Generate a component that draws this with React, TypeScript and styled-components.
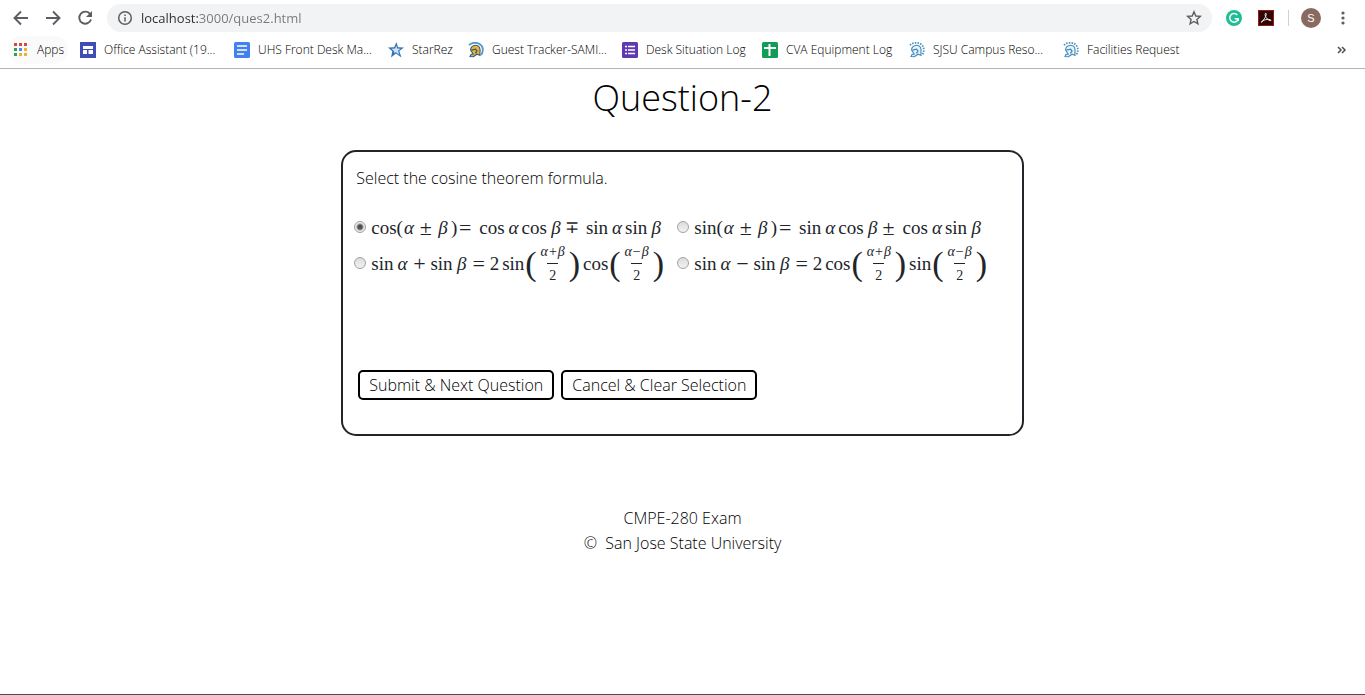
import React, { useState } from "react";
import styled, { createGlobalStyle } from "styled-components";

const GlobalStyle = createGlobalStyle`
  *, *::before, *::after { box-sizing: border-box; }
  body {
    margin: 0;
    background: #fff;
    color: #000;
    font-family: "Open Sans", "Noto Sans", sans-serif;
    font-size: 16px;
    font-weight: 300;
    line-height: 24px;
  }
`;

const Page = styled.div`
  min-height: 100vh;
  display: flex;
  flex-direction: column;
  border-bottom: 1px solid #4f4a54;
`;

const BrowserChrome = styled.header`
  border-bottom: 1px solid #b4b4b4;
`;

const Toolbar = styled.div`
  display: flex;
  align-items: center;
  height: 36px;
  padding: 0 12px 0 11px;
`;

const IconButton = styled.button`
  display: grid;
  place-items: center;
  width: 20px;
  height: 20px;
  padding: 0;
  border: 0;
  background: none;
  color: #5a5d61;
`;

const NavButtons = styled.div`
  display: flex;
  gap: 12px;
  margin-right: 12px;
`;

const AddressBar = styled.div`
  flex: 1;
  display: flex;
  align-items: center;
  gap: 6px;
  height: 28px;
  padding: 0 8px;
  border-radius: 14px;
  background: #f1f3f4;
`;

const AddressInput = styled.input`
  flex: 1;
  min-width: 0;
  height: 20px;
  padding: 0;
  border: 0;
  outline: 0;
  color: transparent;
  caret-color: #333;
  background: linear-gradient(90deg, #2b2e31 57px, #75797d 57px);
  background-clip: text;
  -webkit-background-clip: text;
  font: 13px/20px "Open Sans", sans-serif;
`;

const Extensions = styled.div`
  display: flex;
  align-items: center;
  gap: 12px;
  margin-left: 12px;
`;

const Divider = styled.span`
  width: 1px;
  height: 16px;
  background: #cfd1d3;
`;

const Avatar = styled(IconButton)`
  border-radius: 50%;
  background: #8a6a5f;
  color: #fff;
  font: 11px "Liberation Sans", sans-serif;
`;

const Bookmarks = styled.nav`
  display: flex;
  align-items: center;
  height: 32px;
  padding: 0 15px 4px 8px;
`;

const Bookmark = styled.a<{ $width: number }>`
  display: flex;
  align-items: center;
  gap: 8px;
  flex: 0 0 ${(p) => p.$width}px;
  height: 28px;
  padding-left: 4px;
  border-radius: 14px;
  color: #000;
  font-size: 12px;
  line-height: 16px;
  white-space: nowrap;
  text-decoration: none;
  svg { flex: none; }
`;

const AppsBookmark = styled(Bookmark)`
  flex-basis: 60px;
  margin-right: 8px;
  background: #fafafa;
`;

const MoreBookmarks = styled(IconButton)`
  margin-left: auto;
  width: 16px;
`;

const Main = styled.main`
  display: flex;
  flex-direction: column;
  align-items: center;
`;

const Title = styled.h1`
  margin: 5px 0 28px;
  font-size: 36px;
  line-height: 48px;
  font-weight: 300;
`;

const Card = styled.form`
  width: 50%;
  min-width: 680px;
  padding: 14px 12px 34px 11px;
  border: 2px solid #212529;
  border-radius: 15px;
`;

const Choices = styled.fieldset`
  display: grid;
  grid-template-columns: 323px 1fr;
  grid-template-rows: 36px 36px;
  align-items: center;
  min-width: 0;
  margin: 0;
  padding: 0;
  border: 0;
`;

const Prompt = styled.legend`
  margin-bottom: 20px;
  padding: 0 2px;
`;

const Choice = styled.label`
  display: flex;
  align-items: center;
  gap: 5px;
  white-space: nowrap;
`;

const Radio = styled.input`
  appearance: none;
  width: 12px;
  height: 12px;
  margin: 0 0 3px;
  border: 1px solid #a2a2a2;
  border-radius: 50%;
  background: linear-gradient(#dcdcdc, #f2f2f2);
  &:checked {
    background: radial-gradient(circle, #505050 0 2px, #e8e8e8 4px);
  }
`;

const Formula = styled.span`
  display: flex;
  align-items: center;
  color: #212529;
  font: 19px/24px "Liberation Serif", serif;
`;

const Fn = styled.span`
  margin-right: 3px;
`;

const Var = styled.span`
  width: 12px;
  margin-right: 2px;
  font-style: italic;
  text-align: center;
`;

const SignBox = styled.span<{ $wide?: boolean; $small?: boolean }>`
  width: 14px;
  margin: 0 ${(p) => (p.$wide ? 7 : 4)}px 0 ${(p) => (p.$wide ? 1 : 2)}px;
  display: flex;
  justify-content: center;
  font-size: ${(p) => (p.$small ? 17 : 22)}px;
`;

const TallParen = styled.span`
  font-size: 34px;
`;

const Half = styled.span`
  display: flex;
  align-items: center;
  margin: 0 3px 0 1px;
`;

const Fraction = styled.span`
  display: flex;
  flex-direction: column;
  align-items: center;
  width: 32px;
  font-size: 14px;
  line-height: 12px;
`;

const Numerator = styled.span`
  display: flex;
  gap: 1px;
`;

const Bar = styled.span`
  width: 11px;
  height: 1px;
  margin: 5px 0 6px;
  background: #212529;
`;

const Actions = styled.div`
  display: flex;
  gap: 7px;
  margin: 88px 0 0 4px;
`;

const ActionButton = styled.button`
  height: 30px;
  padding: 0 9px;
  border: 2px solid #000;
  border-radius: 5px;
  background: #fff;
  color: #000;
  font: 300 16px/24px "Open Sans", sans-serif;
`;

const Footer = styled.footer`
  margin-top: 70px;
  text-align: center;
  line-height: 25px;
`;

const BackIcon = ({ flip = false }: { flip?: boolean }) => (
  <svg width="16" height="16" viewBox="0 0 16 16" fill="none" stroke="currentColor" strokeWidth="1.9">
    <path d={flip ? "M1 8H14M8 1.5 14.5 8 8 14.5" : "M15 8H2M8 1.5 1.5 8 8 14.5"} />
  </svg>
);

const ReloadIcon = () => (
  <svg width="16" height="16" viewBox="0 0 16 16" fill="none" stroke="currentColor" strokeWidth="1.9">
    <path d="M13.2 4.2A6 6 0 1 0 14 9.5" />
    <path d="M15 1V7H9Z" fill="currentColor" stroke="none" />
  </svg>
);

const InfoIcon = () => (
  <svg width="20" height="16" viewBox="0 0 20 16" fill="none" stroke="#5a5d61" strokeWidth="1.5">
    <circle cx="10" cy="8" r="6.3" />
    <path d="M10 7.2V11.5M10 4.4V5.9" />
  </svg>
);

const StarIcon = () => (
  <svg width="16" height="16" viewBox="0 0 16 16" fill="none" stroke="currentColor" strokeWidth="1.4">
    <path d="M8 1.8 9.8 6 14.3 6.4 10.9 9.4 11.9 13.9 8 11.5 4.1 13.9 5.1 9.4 1.7 6.4 6.2 6Z" />
  </svg>
);

const GrammarlyIcon = () => (
  <svg width="16" height="16" viewBox="0 0 16 16" fill="none">
    <circle cx="8" cy="8" r="8" fill="#1dbf93" />
    <path d="M11.3 5A4.3 4.3 0 1 0 12.2 9M8.7 8.7H12.2V11" stroke="#fff" strokeWidth="1.5" />
  </svg>
);

const AcrobatIcon = () => (
  <svg width="16" height="16" viewBox="0 0 16 16" fill="none">
    <rect x=".5" y=".5" width="15" height="15" fill="#2b0708" stroke="#a01418" />
    <path d="M7.6 3.2C9 3 8.2 7 3.8 12.2 2.6 13 3 11 6.5 10 10 9 13 9.3 13 10.5 12 11.6 7 8 7.1 4.2Z" stroke="#f1e7e7" strokeWidth="1" />
  </svg>
);

const MenuIcon = () => (
  <svg width="16" height="16" fill="currentColor">
    <circle cx="8" cy="3" r="1.6" />
    <circle cx="8" cy="8" r="1.6" />
    <circle cx="8" cy="13" r="1.6" />
  </svg>
);

const MoreIcon = () => (
  <svg width="10" height="8" fill="none" stroke="#4c4f53" strokeWidth="1.5">
    <path d="M1 1 4 4 1 7M5 1 8 4 5 7" />
  </svg>
);

const appColors = ["#d9443f", "#d9443f", "#d9443f", "#2e9e5b", "#4a8af4", "#e9b233", "#2e9e5b", "#e9b233", "#e9b233"];

const AppsIcon = () => (
  <svg width="17" height="16">
    {appColors.map((fill, i) => (
      <rect key={i} x={2 + (i % 3) * 5} y={1 + Math.floor(i / 3) * 5} width="3" height="3" fill={fill} />
    ))}
  </svg>
);

const SitesIcon = () => (
  <svg width="16" height="16">
    <rect width="16" height="16" fill="#3f4db5" />
    <path d="M3 4H13V7H3ZM3 8H7V12H3ZM8.5 8H13V12H8.5Z" fill="#fff" />
  </svg>
);

const DocsIcon = () => (
  <svg width="16" height="16">
    <rect width="16" height="16" rx="1.5" fill="#4380f0" />
    <path d="M3 4H13M3 8H13M3 12H10" stroke="#fff" strokeWidth="1.7" />
  </svg>
);

const FormsIcon = () => (
  <svg width="16" height="16">
    <rect width="16" height="16" rx="1.5" fill="#6038b0" />
    <path d="M3 4.5H5M3 8H5M3 11.5H5M6 4.5H13M6 8H13M6 11.5H13" stroke="#fff" strokeWidth="1.7" />
  </svg>
);

const SheetsIcon = () => (
  <svg width="16" height="16">
    <rect width="16" height="16" rx="1.5" fill="#109d58" />
    <path d="M2 6H14M7.5 2V14" stroke="#fff" strokeWidth="2" />
  </svg>
);

const StarRezIcon = () => (
  <svg width="16" height="16" viewBox="0 0 16 16">
    <path d="M8.5 0 10 5.2 16 5.5 11.3 9 13.5 15.5 8 11.5 3 15.5 4.3 9.3 0 5.5 6.2 5.2Z" fill="#2f72b9" />
    <path d="M8.3 3.6 9.2 6.4 12.6 6.8 10 8.8 11.4 12.8 8 10.2 6.2 11 6 8.9 3.4 6.8 7.2 6.6Z" fill="#cfe3f5" />
  </svg>
);

const SpartanIcon = ({ gold = false }: { gold?: boolean }) => (
  <svg width="16" height="16" viewBox="0 0 16 16" fill="none">
    <path
      d="M1 3.2C4.5-.4 11 0 13.8 4 15.5 7 15 10 13.2 13"
      stroke={gold ? "#5b97c6" : "#4c8fc0"}
      strokeWidth="1.8"
      strokeDasharray={gold ? undefined : "1.5 1.2"}
    />
    <path
      d="M2.6 8C2.6 3 9.6 1.6 11.6 5.6 12.8 8.6 11.4 11.4 12 13.4L9 12.2 5.4 14.8 2 14.6 3 12.4 5.2 12Z"
      fill={gold ? "#efb32f" : "#e6f2fa"}
      stroke={gold ? "#2a5e8b" : "#4188bd"}
      strokeWidth="1.1"
    />
    <path d="M3.4 8.2 7.6 7.2 9 9 7.4 11.4" stroke={gold ? "#2a5e8b" : "#4188bd"} strokeWidth="1.3" />
  </svg>
);

const bookmarks = [
  { label: "Office Assistant (19...", width: 154, icon: <SitesIcon /> },
  { label: "UHS Front Desk Ma...", width: 154, icon: <DocsIcon /> },
  { label: "StarRez", width: 80, icon: <StarRezIcon /> },
  { label: "Guest Tracker-SAMI...", width: 154, icon: <SpartanIcon gold /> },
  { label: "Desk Situation Log", width: 140, icon: <FormsIcon /> },
  { label: "CVA Equipment Log", width: 147, icon: <SheetsIcon /> },
  { label: "SJSU Campus Reso...", width: 154, icon: <SpartanIcon /> },
  { label: "Facilities Request", width: 140, icon: <SpartanIcon /> },
];

/* The minus-plus glyph comes from a wider fallback face, so it is set smaller. */
const Sign = ({ children, wide }: { children: string; wide?: boolean }) => (
  <SignBox $wide={wide} $small={children === "∓"}>{children}</SignBox>
);

const HalfAngle = ({ sign }: { sign: string }) => (
  <Half>
    <TallParen>(</TallParen>
    <Fraction>
      <Numerator><i>α</i>{sign}<i>β</i></Numerator>
      <Bar />
      <span>2</span>
    </Fraction>
    <TallParen>)</TallParen>
  </Half>
);

type AngleProps = { name: string; terms: [string, string, string, string]; sign: string };

const AngleSum = ({ name, terms, sign }: AngleProps) => (
  <Formula>
    <span>{name}(</span>
    <Var>α</Var><Sign>±</Sign><Var>β</Var><span>)</span>
    <Sign wide>=</Sign>
    <Fn>{terms[0]}</Fn><Var>α</Var><Fn>{terms[1]}</Fn><Var>β</Var>
    <Sign wide>{sign}</Sign>
    <Fn>{terms[2]}</Fn><Var>α</Var><Fn>{terms[3]}</Fn><Var>β</Var>
  </Formula>
);

type ProductProps = { sign: string; first: string; second: string };

const SineProduct = ({ sign, first, second }: ProductProps) => (
  <Formula>
    <Fn>sin</Fn><Var>α</Var><Sign>{sign}</Sign><Fn>sin</Fn><Var>β</Var>
    <Sign>=</Sign>
    <Fn>2</Fn><span>{first}</span><HalfAngle sign="+" />
    <span>{second}</span><HalfAngle sign="−" />
  </Formula>
);

const formulas = [
  <AngleSum name="cos" terms={["cos", "cos", "sin", "sin"]} sign="∓" />,
  <AngleSum name="sin" terms={["sin", "cos", "cos", "sin"]} sign="±" />,
  <SineProduct sign="+" first="sin" second="cos" />,
  <SineProduct sign="−" first="cos" second="sin" />,
];

export default function App() {
  const [selected, setSelected] = useState<number | null>(0);
  return (
    <Page>
      <GlobalStyle />
      <BrowserChrome>
        <Toolbar>
          <NavButtons>
            <IconButton aria-label="Back"><BackIcon /></IconButton>
            <IconButton aria-label="Forward"><BackIcon flip /></IconButton>
            <IconButton aria-label="Reload"><ReloadIcon /></IconButton>
          </NavButtons>
          <AddressBar>
            <InfoIcon />
            <AddressInput aria-label="Address" defaultValue="localhost:3000/ques2.html" />
            <IconButton aria-label="Bookmark this page"><StarIcon /></IconButton>
          </AddressBar>
          <Extensions>
            <IconButton aria-label="Grammarly"><GrammarlyIcon /></IconButton>
            <IconButton aria-label="Acrobat"><AcrobatIcon /></IconButton>
            <Divider />
            <Avatar aria-label="Profile">S</Avatar>
            <IconButton aria-label="Menu"><MenuIcon /></IconButton>
          </Extensions>
        </Toolbar>
        <Bookmarks aria-label="Bookmarks">
          <AppsBookmark href="#" $width={60}><AppsIcon />Apps</AppsBookmark>
          {bookmarks.map((b) => (
            <Bookmark href="#" key={b.label} $width={b.width}>{b.icon}{b.label}</Bookmark>
          ))}
          <MoreBookmarks aria-label="More bookmarks"><MoreIcon /></MoreBookmarks>
        </Bookmarks>
      </BrowserChrome>
      <Main>
        <Title>Question-2</Title>
        <Card onSubmit={(e) => e.preventDefault()}>
          <Choices>
            <Prompt>Select the cosine theorem formula.</Prompt>
            {formulas.map((formula, i) => (
              <Choice key={i}>
                <Radio type="radio" name="formula" checked={selected === i} onChange={() => setSelected(i)} />
                {formula}
              </Choice>
            ))}
          </Choices>
          <Actions>
            <ActionButton type="submit">Submit &amp; Next Question</ActionButton>
            <ActionButton type="button" onClick={() => setSelected(null)}>Cancel &amp; Clear Selection</ActionButton>
          </Actions>
        </Card>
        <Footer>
          <div>CMPE-280 Exam</div>
          <div>©&nbsp; San Jose State University</div>
        </Footer>
      </Main>
    </Page>
  );
}
